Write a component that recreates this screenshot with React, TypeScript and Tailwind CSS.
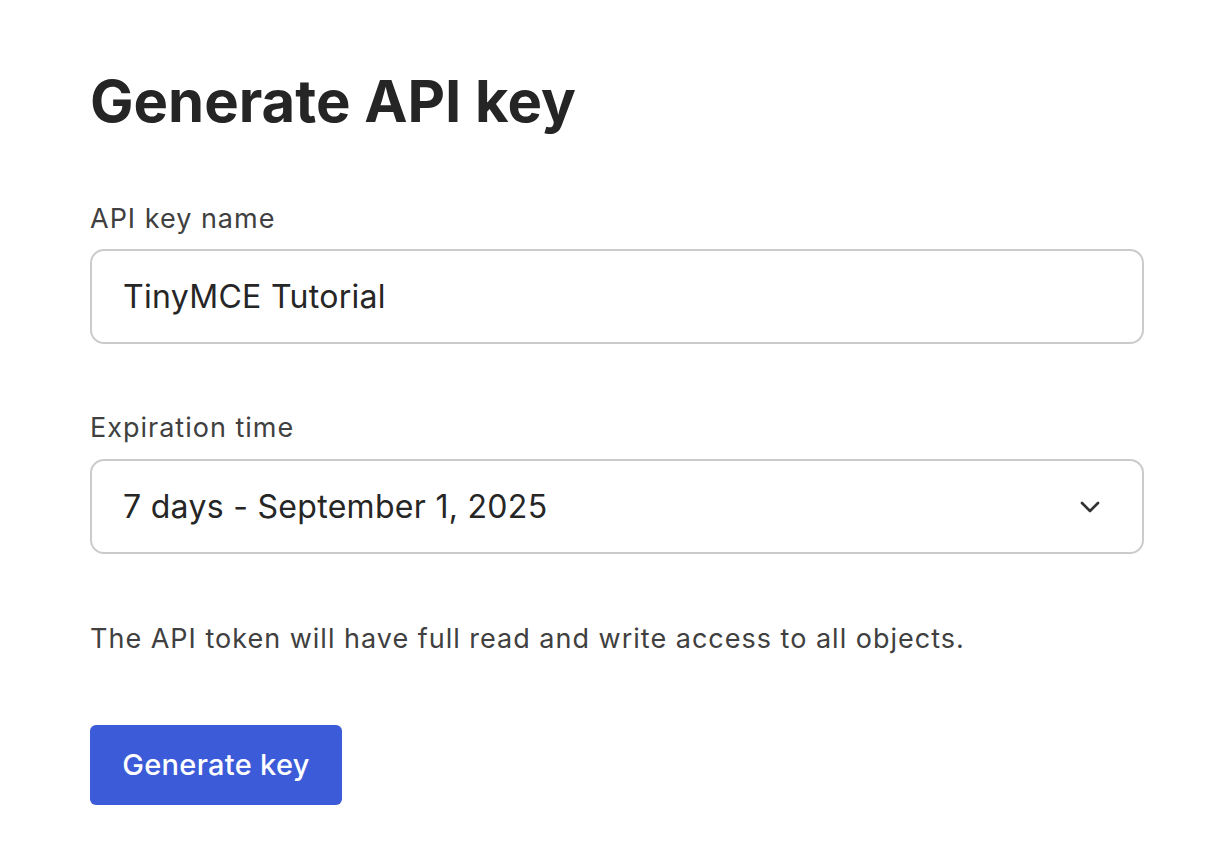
import React from "react";
import { ChevronDown } from "lucide-react";

export default function App() {
  return (
    <div className="min-h-screen bg-white" style={{ fontFamily: "Inter, 'Noto Sans', sans-serif" }}>
      <div className="pl-[90px] pr-[75px] pt-[68px]">
        <h1 className="text-[58px] leading-[66px] font-bold text-[#252525]">Generate API key</h1>
        <div className="mt-[69px] text-[27px] leading-[32px] tracking-[1px] text-[#404040]">API key name</div>
        <div className="mt-[14px] h-[95px] rounded-[14px] border-2 border-[#cbcbcb] flex items-center pl-[31px] text-[32px] tracking-[0.3px] text-[#262626]">
          TinyMCE Tutorial
        </div>
        <div className="mt-[68px] text-[27px] leading-[32px] tracking-[1px] text-[#404040]">Expiration time</div>
        <div className="mt-[15px] h-[95px] rounded-[14px] border-2 border-[#cbcbcb] flex items-center justify-between pl-[31px] pr-[36px] text-[32px] tracking-[0.3px] text-[#262626]">
          <span>7 days - September 1, 2025</span>
          <ChevronDown size={32} strokeWidth={2} className="text-[#333]" />
        </div>
        <p className="mt-[69px] text-[27px] leading-[32px] tracking-[1px] text-[#404040]">
          The API token will have full read and write access to all objects.
        </p>
        <button className="mt-[70px] h-[80px] w-[252px] rounded-[6px] bg-[#3c5bd9] text-white text-[29px] tracking-[0.3px] font-medium">
          Generate key
        </button>
      </div>
    </div>
  );
}
